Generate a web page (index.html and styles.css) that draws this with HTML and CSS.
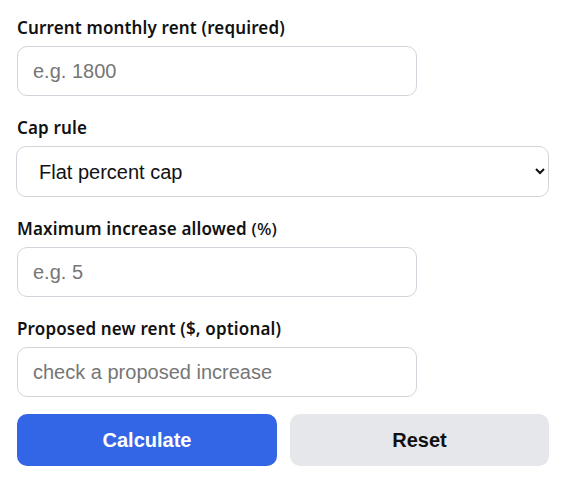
FILE: index.html
```html
<!DOCTYPE html>
<html lang="en">
<head>
<meta charset="utf-8">
<title>Rent cap calculator</title>
<link rel="stylesheet" href="styles.css">
</head>
<body>
<form class="form">
  <div class="field">
    <label class="label" for="rent">Current monthly rent (required)</label>
    <input class="input" id="rent" type="text" placeholder="e.g. 1800">
  </div>
  <div class="field">
    <label class="label" for="rule">Cap rule</label>
    <select class="select" id="rule">
      <option>Flat percent cap</option>
    </select>
  </div>
  <div class="field">
    <label class="label" for="max">Maximum increase allowed <span class="unit">(%)</span></label>
    <input class="input" id="max" type="text" placeholder="e.g. 5">
  </div>
  <div class="field">
    <label class="label" for="prop">Proposed new rent ($, optional)</label>
    <input class="input" id="prop" type="text" placeholder="check a proposed increase">
  </div>
  <div class="actions">
    <button type="button" class="btn btn-primary">Calculate</button>
    <button type="button" class="btn btn-secondary">Reset</button>
  </div>
</form>
</body>
</html>
```

FILE: styles.css
```css
html, body {
  margin: 0;
  padding: 0;
  background: #ffffff;
}
body {
  padding: 16px 32px 16px 17px;
  font-family: "Noto Sans", sans-serif;
  color: #111111;
}
.form {
  width: 533px;
  display: flex;
  flex-direction: column;
}
.field {
  display: flex;
  flex-direction: column;
  margin-bottom: 20px;
}
.field:nth-child(4) {
  margin-bottom: 17px;
}
.label {
  font-size: 17px;
  line-height: 24px;
  font-weight: 600;
  letter-spacing: 0.15px;
  margin-bottom: 6px;
  color: #111111;
}
.unit {
  font-weight: 500;
}
.input, .select {
  box-sizing: border-box;
  height: 50px;
  border: 1px solid #d1d5db;
  border-radius: 10px;
  font-family: "Liberation Sans", Arial, sans-serif;
  font-size: 20px;
  color: #111111;
  background: #ffffff;
  margin: 0;
}
.input {
  width: 400px;
  padding: 0 15px;
}
.input::placeholder {
  color: #767676;
}
.select {
  width: 533px;
  height: 51px;
  padding: 0 14px 0 18px;
  margin-left: -1px;
}
.actions {
  display: grid;
  grid-template-columns: 260px 259px;
  gap: 13px;
}
.btn {
  height: 52px;
  border: none;
  border-radius: 10px;
  font-family: "Liberation Sans", Arial, sans-serif;
  font-size: 20px;
  font-weight: 700;
  cursor: pointer;
}
.btn-primary {
  background: #3366e6;
  color: #ffffff;
}
.btn-secondary {
  background: #e5e7eb;
  color: #111111;
}
```
